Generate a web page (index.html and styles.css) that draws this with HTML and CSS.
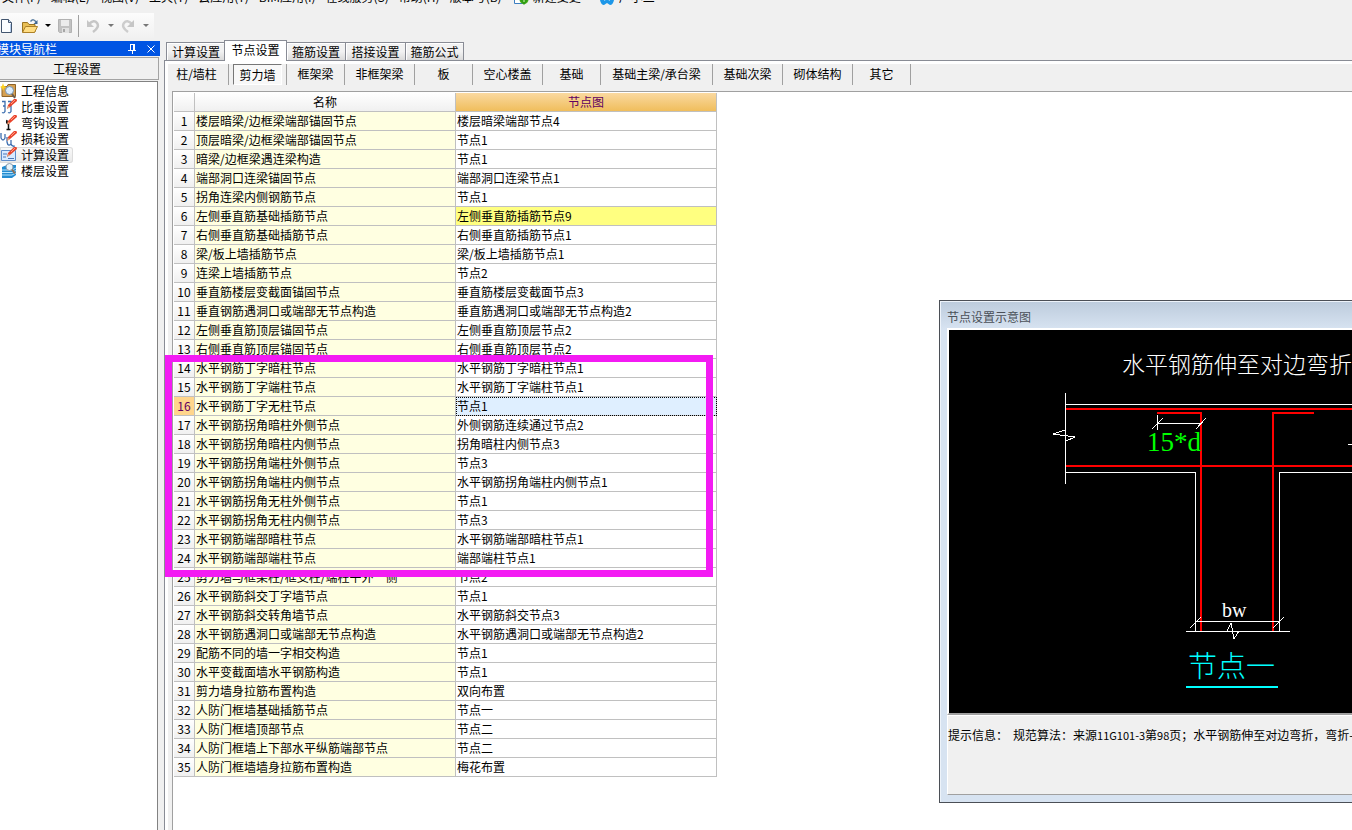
FILE: index.html
```html
<!DOCTYPE html>
<html lang="zh-CN">
<head>
<meta charset="utf-8">
<title>节点设置</title>
<link rel="stylesheet" href="styles.css">
</head>
<body>
<nav class="menubar">
  <button>文件(F)</button><button>编辑(E)</button><button>视图(V)</button><button>工具(T)</button><button>云应用(Y)</button><button>BIM应用(I)</button><button>在线服务(S)</button><button>帮助(H)</button><button>版本号(B)</button>
  <button class="menu-icon"><svg width="16" height="16" viewBox="0 0 16 16"><path d="M1.500 1.500h9v13h-9z" fill="#fff" stroke="#3c7fc0"/><circle cx="11" cy="10.500" r="4.500" fill="#4eb020"/><path d="M11 16l-4-5h8z" fill="#2f9d12"/><path d="M11 8v5M8.500 10.500h5" stroke="#d9f7b8"/></svg>新建变更</button>
  <button class="menu-icon helper"><svg width="16" height="16" viewBox="0 0 16 16"><path d="M1 5q7-6 14 0v6q-1 5-4 5l-3-2-3 2q-3 0-4-5z" fill="#1d97e8"/><path d="M5 11q3-3 6 0" fill="none" stroke="#fff" stroke-width="2"/></svg>广小二</button>
</nav>

<div class="toolbar">
  <div class="tools">
    <button class="tool new" aria-label="新建"><svg width="14" height="16" viewBox="0 0 14 16"><path d="M1.500 1.500h7l3 3v10h-10z" fill="#fbfdff" stroke="#42556e"/><path d="M8.500 1.500v3h3" fill="#c9dcf3" stroke="#42556e"/><path d="M10.500 6v8" stroke="#b6cdec"/></svg></button>
    <button class="tool open" aria-label="打开"><svg width="18" height="16" viewBox="0 0 18 16"><path d="M1.500 14V4.500h5l1.500 2h6V14z" fill="#e9bf55" stroke="#9b7421"/><path d="M1.500 14.500l3-6h12l-3 6z" fill="#ffdd83" stroke="#ad8128"/><path d="M9.500 3.500q3-3.500 5.500.5" fill="none" stroke="#54799d" stroke-width="1.500"/><path d="M16.500 2v4h-4z" fill="#3f6690"/></svg></button>
    <button class="drop" aria-label="打开选项"><svg width="6" height="4"><path d="M0 0h6L3 3z" fill="#000"/></svg></button>
    <button class="tool save" aria-label="保存"><svg width="16" height="16" viewBox="0 0 16 16"><path d="M1.500 1.500h13v13h-12l-1-1z" fill="#c2c2c2" stroke="#b2b2b2"/><path d="M4 2h8v6H4z" fill="#ececec"/><path d="M5 10h7v5H5z" fill="#e2e2e2"/><path d="M6 11h2v3H6z" fill="#a5a5a5"/></svg></button>
    <span class="tool-sep"></span>
    <button class="tool undo" aria-label="撤销"><svg width="14" height="14" viewBox="0 0 14 14"><path d="M3 5q5-5 8-1t-4 9" fill="none" stroke="#c6c6c6" stroke-width="2.500"/><path d="M1 1v7h7z" fill="#c6c6c6"/></svg></button>
    <button class="drop" aria-label="撤销选项"><svg width="6" height="4"><path d="M0 0h6L3 3z" fill="#777"/></svg></button>
    <button class="tool redo" aria-label="恢复"><svg width="14" height="14" viewBox="0 0 14 14"><path d="M11 5q-5-5-8-1t4 9" fill="none" stroke="#cdcdcd" stroke-width="2.500"/><path d="M13 1v7H6z" fill="#c6c6c6"/></svg></button>
    <button class="drop" aria-label="恢复选项"><svg width="6" height="4"><path d="M0 0h6L3 3z" fill="#777"/></svg></button>
  </div>
</div>

<div class="workspace">
  <aside class="sidebar">
    <header class="side-title"><span>模块导航栏</span>
      <button aria-label="固定"><svg width="9" height="10" viewBox="0 0 9 10"><path d="M2.500 0v6M2 .5h4M0 6.500h8M4.500 7v3" fill="none" stroke="#fff"/><path d="M5 0h2v6H5z" fill="#fff"/></svg></button>
      <button aria-label="关闭"><svg width="8" height="8" viewBox="0 0 8 8"><path d="M.5.5l7 7M7.500.5l-7 7" stroke="#fff"/></svg></button>
    </header>
    <button class="side-head">工程设置</button>
    <ul class="side-list">
      <li><button><svg width="18" height="16" viewBox="0 0 18 16"><path d="M2 3.500h5l1-2h7.500v12H2z" fill="#d5a052" stroke="#8d6228"/><path d="M3 0l1 3 3 1-3 1-1 3-1-3-2-1 2-1z" fill="#ffd31f"/><circle cx="9.500" cy="7.500" r="4" fill="#dceeff" stroke="#7691ad"/><path d="M12 11l3 4" stroke="#695d54" stroke-width="2"/></svg>工程信息</button></li>
      <li><button><svg width="18" height="16" viewBox="0 0 18 16"><path d="M2 2.500h3v10q-1 2-3 1M8 2.500h3v10q-1 2-3 1M3 7h2M9 7h2" fill="none" stroke="#3e6fb0" stroke-width="1.300"/><path d="M7 10l1-4 6-6q3-1 3 2l-7 6z" fill="#e9442c"/><path d="M7 10l1-3 2 1z" fill="#dcae82"/><path d="M11 5l4-4" stroke="#ff9a82"/></svg>比重设置</button></li>
      <li><button><svg width="18" height="16" viewBox="0 0 18 16"><path d="M8.500 6v8M6.500 14.500h4M7 5q-1 3 1 4" fill="none" stroke="#111" stroke-width="1.500"/><path d="M7 10l1-4 6-6q3-1 3 2l-7 6z" fill="#e9442c"/><path d="M7 10l1-3 2 1z" fill="#dcae82"/><path d="M11 5l4-4" stroke="#ff9a82"/></svg>弯钩设置</button></li>
      <li><button><svg width="18" height="16" viewBox="0 0 18 16"><path d="M1 2v5q2 4 4 0V3M7 6v5q1 5 4 2M11 9v4q1 3 4 2" fill="none" stroke="#3e6fb0" stroke-width="1.300"/><path d="M7 10l1-4 6-6q3-1 3 2l-7 6z" fill="#e9442c"/><path d="M7 10l1-3 2 1z" fill="#dcae82"/><path d="M11 5l4-4" stroke="#ff9a82"/></svg>损耗设置</button></li>
      <li><button class="current"><svg width="18" height="16" viewBox="0 0 18 16"><path d="M1.500 3.500h14v10h-14z" fill="#d8eaff" stroke="#5d8cca"/><path d="M3 7h4M3 10h3M8 11.500h6" stroke="#4a77b7"/><path d="M7 10l1-4 6-6q3-1 3 2l-7 6z" fill="#e9442c"/><path d="M7 10l1-3 2 1z" fill="#dcae82"/><path d="M11 5l4-4" stroke="#ff9a82"/></svg>计算设置</button></li>
      <li><button><svg width="18" height="16" viewBox="0 0 18 16"><path d="M2 4l5-2h9v10l-4 3H2z" fill="#238bd0"/><path d="M2 7h10l4-2M2 9.500h10l4-2M2 12h10l4-2" fill="none" stroke="#b6e5ff"/><circle cx="9.500" cy="4" r="3.500" fill="#e8f4fb" stroke="#8b9bab"/><path d="M12 6.500l3 4" stroke="#8a6d55" stroke-width="2"/></svg>楼层设置</button></li>
    </ul>
  </aside>

  <main class="main">
    <div class="tabs">
      <button>计算设置</button><button class="active">节点设置</button><button>箍筋设置</button><button>搭接设置</button><button>箍筋公式</button>
    </div>
    <div class="panel">
      <div class="subtabs">
        <div class="first"><button>柱/墙柱</button></div><div><button class="pressed">剪力墙</button></div><div><button>框架梁</button></div><div class="wide"><button>非框架梁</button></div><div><button>板</button></div><div class="wide"><button>空心楼盖</button></div><div><button>基础</button></div><div class="widest"><button>基础主梁/承台梁</button></div><div class="wide"><button>基础次梁</button></div><div class="wide"><button>砌体结构</button></div><div><button>其它</button></div>
      </div>
      <div class="sheet">
        <div class="sheet-inner">
        <table>
          <colgroup><col class="c-num"><col class="c-name"><col class="c-node"></colgroup>
          <thead><tr><th></th><th>名称</th><th class="picked">节点图</th></tr></thead>
          <tbody>
            <tr><th>1</th><td>楼层暗梁/边框梁端部锚固节点</td><td>楼层暗梁端部节点4</td></tr>
            <tr><th>2</th><td>顶层暗梁/边框梁端部锚固节点</td><td>节点1</td></tr>
            <tr><th>3</th><td>暗梁/边框梁遇连梁构造</td><td>节点1</td></tr>
            <tr><th>4</th><td>端部洞口连梁锚固节点</td><td>端部洞口连梁节点1</td></tr>
            <tr><th>5</th><td>拐角连梁内侧钢筋节点</td><td>节点1</td></tr>
            <tr><th>6</th><td>左侧垂直筋基础插筋节点</td><td class="changed">左侧垂直筋插筋节点9</td></tr>
            <tr><th>7</th><td>右侧垂直筋基础插筋节点</td><td>右侧垂直筋插筋节点1</td></tr>
            <tr><th>8</th><td>梁/板上墙插筋节点</td><td>梁/板上墙插筋节点1</td></tr>
            <tr><th>9</th><td>连梁上墙插筋节点</td><td>节点2</td></tr>
            <tr><th>10</th><td>垂直筋楼层变截面锚固节点</td><td>垂直筋楼层变截面节点3</td></tr>
            <tr><th>11</th><td>垂直钢筋遇洞口或端部无节点构造</td><td>垂直筋遇洞口或端部无节点构造2</td></tr>
            <tr><th>12</th><td>左侧垂直筋顶层锚固节点</td><td>左侧垂直筋顶层节点2</td></tr>
            <tr><th>13</th><td>右侧垂直筋顶层锚固节点</td><td>右侧垂直筋顶层节点2</td></tr>
            <tr><th>14</th><td>水平钢筋丁字暗柱节点</td><td>水平钢筋丁字暗柱节点1</td></tr>
            <tr><th>15</th><td>水平钢筋丁字端柱节点</td><td>水平钢筋丁字端柱节点1</td></tr>
            <tr><th class="picked">16</th><td>水平钢筋丁字无柱节点</td><td class="focus">节点1</td></tr>
            <tr><th>17</th><td>水平钢筋拐角暗柱外侧节点</td><td>外侧钢筋连续通过节点2</td></tr>
            <tr><th>18</th><td>水平钢筋拐角暗柱内侧节点</td><td>拐角暗柱内侧节点3</td></tr>
            <tr><th>19</th><td>水平钢筋拐角端柱外侧节点</td><td>节点3</td></tr>
            <tr><th>20</th><td>水平钢筋拐角端柱内侧节点</td><td>水平钢筋拐角端柱内侧节点1</td></tr>
            <tr><th>21</th><td>水平钢筋拐角无柱外侧节点</td><td>节点1</td></tr>
            <tr><th>22</th><td>水平钢筋拐角无柱内侧节点</td><td>节点3</td></tr>
            <tr><th>23</th><td>水平钢筋端部暗柱节点</td><td>水平钢筋端部暗柱节点1</td></tr>
            <tr><th>24</th><td>水平钢筋端部端柱节点</td><td>端部端柱节点1</td></tr>
            <tr><th>25</th><td>剪力墙与框架柱/框支柱/端柱平外一侧</td><td>节点2</td></tr>
            <tr><th>26</th><td>水平钢筋斜交丁字墙节点</td><td>节点1</td></tr>
            <tr><th>27</th><td>水平钢筋斜交转角墙节点</td><td>水平钢筋斜交节点3</td></tr>
            <tr><th>28</th><td>水平钢筋遇洞口或端部无节点构造</td><td>水平钢筋遇洞口或端部无节点构造2</td></tr>
            <tr><th>29</th><td>配筋不同的墙一字相交构造</td><td>节点1</td></tr>
            <tr><th>30</th><td>水平变截面墙水平钢筋构造</td><td>节点1</td></tr>
            <tr><th>31</th><td>剪力墙身拉筋布置构造</td><td>双向布置</td></tr>
            <tr><th>32</th><td>人防门框墙基础插筋节点</td><td>节点一</td></tr>
            <tr><th>33</th><td>人防门框墙顶部节点</td><td>节点二</td></tr>
            <tr><th>34</th><td>人防门框墙上下部水平纵筋端部节点</td><td>节点二</td></tr>
            <tr><th>35</th><td>人防门框墙墙身拉筋布置构造</td><td>梅花布置</td></tr>
          </tbody>
        </table>
        </div>
      </div>
    </div>
  </main>
</div>

<div class="highlight"></div>

<section class="dialog">
  <h2>节点设置示意图</h2>
  <div class="canvas">
    <svg width="800" height="383" viewBox="0 0 800 383">
      <g class="rebar">
        <path d="M116 79H800M116 136H800M208 83H252V301M365 83H324V301"/>
      </g>
      <g class="outline">
        <path d="M116.500 63V154M116 74.500H800M116 142.500H246.500V301M800 142.500H330.500V301M237 301.500H341"/>
        <path d="M208.500 85V100M208 93.500H252M247 291.500H330M399 114.500H420"/>
        <path d="M203 99L214 88M247 99L257 88M241 298L252 287M324 298L335 287"/>
        <path d="M116 100L104 104L126 107L117 111M278 301L282 293L285 309L290 301"/>
      </g>
      <text class="caption" x="173" y="43">水平钢筋伸至对边弯折</text>
      <text class="measure" x="198" y="121">15*d</text>
      <text class="width" x="273" y="287">bw</text>
      <text class="node" x="239" y="347">节点一</text>
      <path d="M237 357H329" stroke="#00ffff" stroke-width="2"/>
    </svg>
  </div>
  <p class="tip"><span>提示信息：</span><span>规范算法：来源<span class="code">11G101-3</span>第<span class="code">98</span>页；水平钢筋伸至对边弯折，弯折-</span></p>
</section>
</body>
</html>
```
FILE: styles.css
```css
* { box-sizing: border-box; }
body {
  margin: 0;
  height: 100vh;
  overflow: hidden;
  display: flex;
  flex-direction: column;
  background: #f0f0f0;
  color: #000;
  font: 12px/16px "Noto Sans CJK SC", sans-serif;
}
button {
  margin: 0;
  padding: 0;
  border: 0;
  background: none;
  color: inherit;
  font: inherit;
  white-space: nowrap;
}
svg { display: block; flex: none; }

.menubar {
  display: flex;
  gap: 10px;
  height: 16px;
  margin-top: -11px;
  padding-left: 2px;
  flex: none;
}
.menu-icon { display: flex; gap: 4px; margin-left: 1px; }
.helper { margin-left: 8px; }

.toolbar { flex: none; padding: 8px 0 3px; }
.tools {
  display: flex;
  align-items: center;
  width: 154px;
  height: 25px;
  background: linear-gradient(#fcfcfc, #f1f1f1);
}
.tool { width: 16px; flex: none; }
.new { width: 21px; }
.open { width: 24px; }
.drop { width: 12px; display: flex; }
.save { margin-left: 1px; }
.tool-sep { width: 1px; height: 22px; margin: 0 7px 0 5px; background: #a0a0a0; }
.undo, .redo { width: 22px; }
.redo { margin-left: 1px; }

.workspace { display: flex; flex: 1; min-height: 0; }
.sidebar {
  width: 160px;
  flex: none;
  display: flex;
  flex-direction: column;
}
.side-title {
  display: flex;
  align-items: center;
  gap: 10px;
  height: 15px;
  padding-right: 5px;
  background: #0054e3;
  color: #fff;
  line-height: 14px;
}
.side-title span { flex: 1; margin-left: -3px; }
.side-head {
  height: 23px;
  margin: 1px 1px 1px -1px;
  padding-right: 4px;
  border: 1px solid #a3a3a3;
}
.side-list {
  flex: 1;
  list-style: none;
  margin: 0 2px 0 0;
  padding: 1px 0 0;
  background: #fff;
  border-top: 1px solid #828282;
  border-right: 1px solid #828282;
}
.side-list button { display: flex; gap: 3px; height: 16px; padding-right: 4px; }
.side-list .current {
  border-radius: 0 3px 3px 0;
  background: linear-gradient(#fafafa, #e8e8e8);
  box-shadow: inset 0 0 0 1px #dcdcdc;
}

.main {
  flex: 1;
  min-width: 0;
  display: flex;
  flex-direction: column;
  margin-left: 4px;
}
.tabs {
  display: flex;
  align-items: flex-end;
  height: 19px;
  margin-left: 2px;
}
.tabs button {
  width: 60px;
  height: 18px;
  border: 1px solid #898c95;
  border-bottom: 0;
  border-left-width: 0;
  background: linear-gradient(#f2f2f2 50%, #dadada);
  box-shadow: inset 1px 1px #fff;
}
.tabs button:first-child { border-left-width: 1px; }
.tabs button:last-child { width: 58px; }
.tabs .active {
  width: 63px;
  height: 21px;
  margin: 0 0 -1px -2px;
  padding-bottom: 2px;
  border-left-width: 1px;
  background: #fff;
  position: relative;
}
.tabs .active + button { width: 59px; }

.panel {
  flex: 1;
  min-height: 0;
  display: flex;
  flex-direction: column;
  border-top: 1px solid #898c95;
  border-left: 1px solid #898c95;
  background: #f0f0f0;
  box-shadow: inset 3px 3px #fff;
  padding: 3px 0 0 7px;
}
.subtabs { display: flex; height: 21px; flex: none; }
.subtabs div {
  display: flex;
  justify-content: center;
  width: 58px;
  border-right: 1px solid #a0a0a0;
}
.subtabs button { padding-bottom: 2px; }
.subtabs .first { width: 57px; padding-right: 7px; }
.subtabs .wide { width: 70px; }
.subtabs .widest { width: 112px; }
.subtabs .pressed {
  padding: 0 5px;
  border: 1px solid #fff;
  border-top-color: #777;
  border-left-color: #777;
  background: #f8f8f8;
}

.sheet {
  flex: 1;
  min-height: 0;
  margin-top: 6px;
  border-top: 1px solid #a0a0a0;
  border-left: 1px solid #a0a0a0;
  background: #fff;
}
.sheet-inner { padding: 1px 0 0 1px; }
table { table-layout: fixed; width: 543px; border-collapse: separate; border-spacing: 0; }
.c-num { width: 21px; }
.c-name { width: 261px; }
.c-node { width: 261px; }
th, td {
  height: 19px;
  padding: 0 1px;
  border-right: 1px solid #c0c0c0;
  border-bottom: 1px solid #c0c0c0;
  line-height: 18px;
  white-space: nowrap;
  overflow: hidden;
}
th { padding: 0; font-weight: 400; text-align: center; background: linear-gradient(#fff, #f0f0f0); }
td:nth-child(2) { background: #ffffe1; }
thead .picked { background: linear-gradient(#fad9a0, #f0be5c); color: #600060; }
tbody .picked { background: #ffd58c; color: #600060; }
td.changed { background: #ffff80; }
td.focus { background: #dfefff; outline: 1px dotted #000; outline-offset: -1px; }

.highlight {
  position: absolute;
  left: 165px;
  top: 355px;
  width: 548px;
  height: 222px;
  border: 7px solid #f31bf3;
}

.dialog {
  position: absolute;
  left: 939px;
  right: 0;
  top: 300px;
  display: flex;
  flex-direction: column;
  padding: 1px 0 7px 7px;
  border: 1px solid #4b4f56;
  border-right: 0;
  background: linear-gradient(#bccbdc, #d7e3f1 28px);
  box-shadow: inset 1px 1px #edf3fa;
  overflow: hidden;
}
.dialog h2 {
  margin: 0;
  padding-top: 5px;
  height: 26px;
  font-size: 12px;
  line-height: 20px;
  font-weight: 400;
  color: #4a5058;
}
.canvas {
  overflow: hidden;
  background: #000;
  border: 2px solid #fff;
  border-right: 0;
  border-bottom-color: #a0a0a0;
}
.rebar { fill: none; stroke: #f00; stroke-width: 2; }
.outline { fill: none; stroke: #fff; shape-rendering: crispEdges; }
.caption, .node { font-family: "Noto Sans CJK SC", sans-serif; font-weight: 300; }
.caption { font-size: 23px; fill: #fff; }
.node { font-size: 29px; fill: #0ff; }
.measure, .width { font-family: "Liberation Serif", serif; }
.measure { font-size: 27px; fill: #0f0; }
.width { font-size: 20px; fill: #fff; }
.tip {
  display: flex;
  gap: 5px;
  height: 80px;
  margin: 0;
  padding-top: 11px;
  border-top: 1px solid #fff;
  border-left: 1px solid #fff;
  border-bottom: 1px solid #a0a0a0;
  background: #f0f0f0;
  white-space: nowrap;
}
.code { font-size: 11px; }
```
